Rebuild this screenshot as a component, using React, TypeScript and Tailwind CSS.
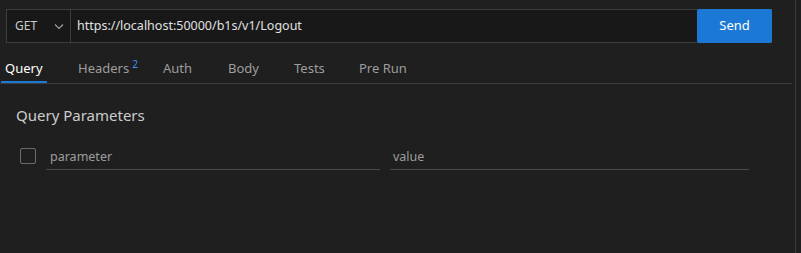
export default function App() {
  const tabs = [
    { t: "Headers", w: "w-[85px]" },
    { t: "Auth", w: "w-[65px]" },
    { t: "Body", w: "w-[66px]" },
    { t: "Tests", w: "w-[65px]" },
    { t: "Pre Run", w: "w-[60px]" },
  ];
  return (
    <div className="relative h-[253px] w-[801px] overflow-hidden bg-[#1f1f1f] text-[13px] text-[#cccccc] [font-family:'Noto_Sans','Open_Sans',sans-serif]">
      <div className="absolute right-[5px] top-0 h-full w-px bg-[#3c3c3c]" />
      {/* Request bar */}
      <div className="pl-[6px] pr-[29px] pt-[9px]">
        <div className="flex h-[34px] border border-[#3c3c3c] bg-[#181818]">
          <div className="flex w-[64px] items-center justify-between border-r border-[#3c3c3c] pl-[8px] pr-[5px]">
            <span className="text-[12px] text-[#cccccc]">GET</span>
            <svg width="12" height="12" viewBox="0 0 12 12" className="text-[#a0a0a0]">
              <path d="M2 4.5l4 4 4-4" fill="none" stroke="currentColor" strokeWidth="1.1" />
            </svg>
          </div>
          <div className="flex flex-1 items-center pl-[6px] text-[12.5px] text-[#e0e0e0]">
            https://localhost:50000/b1s/v1/Logout
          </div>
          <button className="-my-px -mr-px w-[75px] rounded-[2px] bg-[#1b78d4] text-[13px] text-white">
            Send
          </button>
        </div>
      </div>
      {/* Tabs */}
      <div className="mr-[9px] mt-[15px] flex h-[26px] items-end border-b border-[#3c3c3c]">
        <div className="ml-px flex h-full w-[77px] flex-col items-start justify-between">
          <span className="px-[4px] leading-[20px] text-white">Query</span>
          <div className="h-[2px] w-[46px] bg-[#1b78d4]" />
        </div>
        <div className="flex h-full pb-[4px] text-[#9d9d9d]">
          {tabs.map(({ t, w }) => (
            <span key={t} className={`${w} leading-[20px]`}>
              {t}
              {t === "Headers" && (
                <sup className="ml-[3px] text-[10px] text-[#3794ff]">2</sup>
              )}
            </span>
          ))}
        </div>
      </div>
      {/* Query params */}
      <div className="pl-[16px] pt-[20px]">
        <div className="text-[15px] text-[#cccccc]">Query Parameters</div>
        <div className="mt-[21px] flex items-end">
          <div className="mb-[6px] ml-[4px] h-[16px] w-[16px] rounded-[2px] border border-[#6b6b6b]" />
          <div className="ml-[10px] w-[334px] border-b border-[#4a4a4a] pb-[3px] pl-[4px] text-[12.5px] text-[#9d9d9d]">
            parameter
          </div>
          <div className="ml-[10px] w-[359px] border-b border-[#4a4a4a] pb-[3px] pl-[3px] text-[12.5px] text-[#9d9d9d]">
            value
          </div>
        </div>
      </div>
    </div>
  );
}
